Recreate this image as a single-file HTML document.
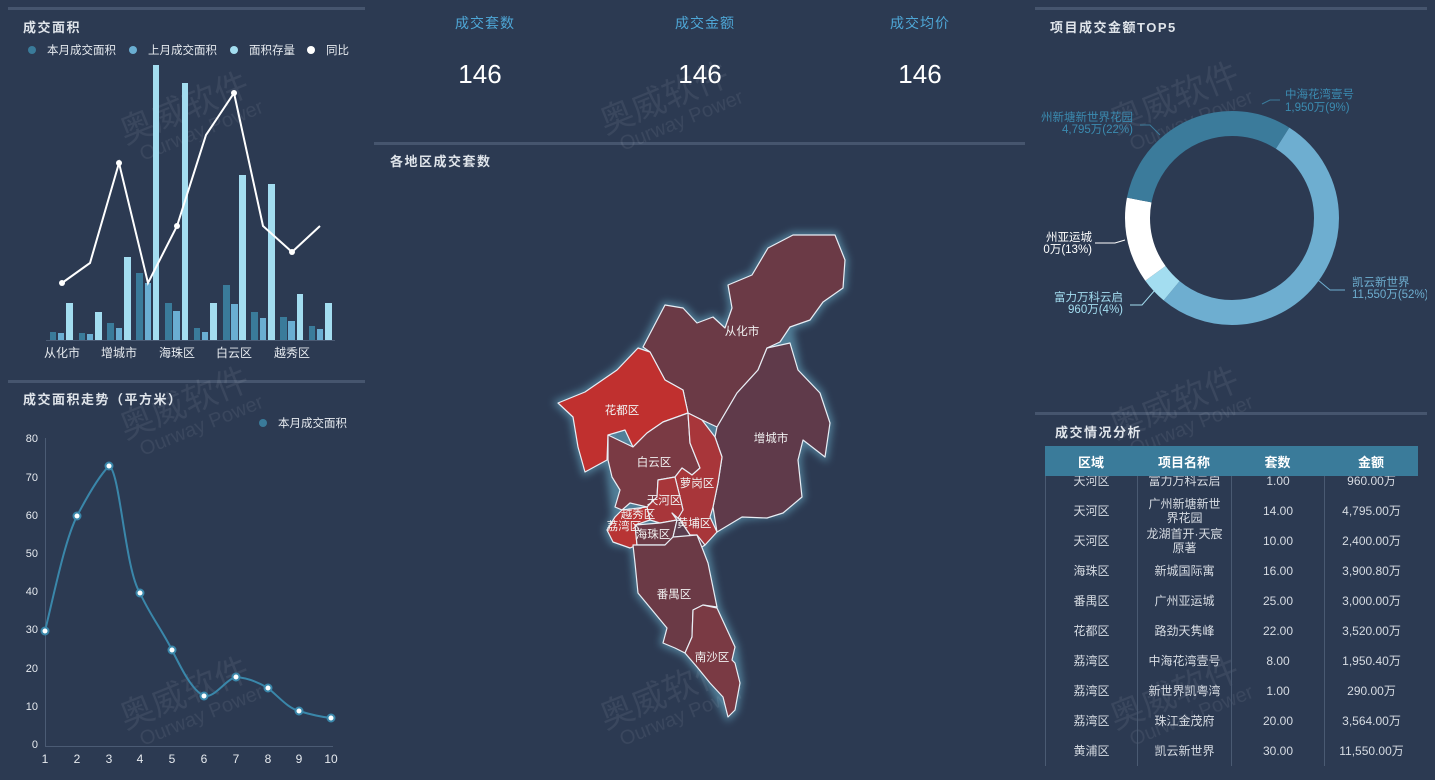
<!DOCTYPE html>
<html><head><meta charset="utf-8"><style>
*{margin:0;padding:0;box-sizing:border-box}
body{width:1435px;height:780px;background:#2c3a52;font-family:"Liberation Sans","Noto Sans CJK SC",sans-serif;color:#dfe4ea;position:relative;overflow:hidden}
.a{position:absolute}
.bar{position:absolute;height:3px;background:#46556e}
.t{position:absolute;font-size:13px;font-weight:bold;letter-spacing:1.5px;color:#dfe4ea}
.wm{position:absolute;font-size:34px;color:rgba(255,255,255,0.07);transform:rotate(-22deg);white-space:nowrap;line-height:1}
.wm small{display:block;font-size:20px;margin-left:10px}
table{border-collapse:collapse;position:absolute;width:373px;font-size:12px;color:#d6dbe2;table-layout:fixed}
td{height:30px;text-align:center;border-left:1px solid #4a5a72;border-right:1px solid #4a5a72;line-height:14px}
</style></head><body>
<div class="bar" style="left:8px;top:7px;width:357px"></div>
<div class="bar" style="left:374px;top:142px;width:651px"></div>
<div class="bar" style="left:1035px;top:7px;width:392px"></div>
<div class="bar" style="left:8px;top:380px;width:357px"></div>
<div class="bar" style="left:1035px;top:412px;width:392px"></div>

<div class="wm" style="left:600px;top:80px">奥威软件<small>Ourway Power</small></div>
<div class="wm" style="left:1110px;top:80px">奥威软件<small>Ourway Power</small></div>
<div class="wm" style="left:120px;top:90px">奥威软件<small>Ourway Power</small></div>
<div class="wm" style="left:120px;top:385px">奥威软件<small>Ourway Power</small></div>
<div class="wm" style="left:600px;top:385px">奥威软件<small>Ourway Power</small></div>
<div class="wm" style="left:1110px;top:385px">奥威软件<small>Ourway Power</small></div>
<div class="wm" style="left:120px;top:675px">奥威软件<small>Ourway Power</small></div>
<div class="wm" style="left:600px;top:675px">奥威软件<small>Ourway Power</small></div>
<div class="wm" style="left:1110px;top:675px">奥威软件<small>Ourway Power</small></div>

<div class="t" style="left:23px;top:17px">成交面积</div>
<div class="t" style="left:23px;top:389px">成交面积走势（平方米）</div>
<div class="t" style="left:390px;top:151px">各地区成交套数</div>
<div class="t" style="left:1050px;top:17px">项目成交金额TOP5</div>
<div class="t" style="left:1055px;top:422px">成交情况分析</div>

<div class="a" style="left:425px;top:13px;width:120px;text-align:center;color:#4ea6d6;font-size:14px;letter-spacing:1px">成交套数</div>
<div class="a" style="left:645px;top:13px;width:120px;text-align:center;color:#4ea6d6;font-size:14px;letter-spacing:1px">成交金额</div>
<div class="a" style="left:860px;top:13px;width:120px;text-align:center;color:#4ea6d6;font-size:14px;letter-spacing:1px">成交均价</div>
<div class="a" style="left:420px;top:59px;width:120px;text-align:center;color:#fff;font-size:26px">146</div>
<div class="a" style="left:640px;top:59px;width:120px;text-align:center;color:#fff;font-size:26px">146</div>
<div class="a" style="left:860px;top:59px;width:120px;text-align:center;color:#fff;font-size:26px">146</div>

<svg class="a" style="left:0;top:0" width="370" height="380" font-family="Liberation Sans,Noto Sans CJK SC,sans-serif">
<g font-size="11.5" fill="#e6eaef">
<circle cx="32" cy="50" r="4" fill="#3a7b9a"/><text x="47" y="54">本月成交面积</text>
<circle cx="133" cy="50" r="4" fill="#6aaed2"/><text x="148" y="54">上月成交面积</text>
<circle cx="234" cy="50" r="4" fill="#a3ddf0"/><text x="249" y="54">面积存量</text>
<circle cx="311" cy="50" r="4" fill="#fff"/><text x="326" y="54">同比</text>
</g>
<g>
<rect x="50" y="332" width="6" height="8" fill="#3a7b9a"/><rect x="58" y="333" width="6" height="7" fill="#6aaed2"/><rect x="66" y="303" width="7" height="37" fill="#a3ddf0"/>
<rect x="79" y="333" width="6" height="7" fill="#3a7b9a"/><rect x="87" y="334" width="6" height="6" fill="#6aaed2"/><rect x="95" y="312" width="7" height="28" fill="#a3ddf0"/>
<rect x="107" y="323" width="7" height="17" fill="#3a7b9a"/><rect x="116" y="328" width="6" height="12" fill="#6aaed2"/><rect x="124" y="257" width="7" height="83" fill="#a3ddf0"/>
<rect x="136" y="273" width="7" height="67" fill="#3a7b9a"/><rect x="145" y="283" width="6" height="57" fill="#6aaed2"/><rect x="153" y="65" width="6" height="275" fill="#a3ddf0"/>
<rect x="165" y="303" width="7" height="37" fill="#3a7b9a"/><rect x="173" y="311" width="7" height="29" fill="#6aaed2"/><rect x="182" y="83" width="6" height="257" fill="#a3ddf0"/>
<rect x="194" y="328" width="6" height="12" fill="#3a7b9a"/><rect x="202" y="332" width="6" height="8" fill="#6aaed2"/><rect x="210" y="303" width="7" height="37" fill="#a3ddf0"/>
<rect x="223" y="285" width="7" height="55" fill="#3a7b9a"/><rect x="231" y="304" width="7" height="36" fill="#6aaed2"/><rect x="239" y="175" width="7" height="165" fill="#a3ddf0"/>
<rect x="251" y="312" width="7" height="28" fill="#3a7b9a"/><rect x="260" y="318" width="6" height="22" fill="#6aaed2"/><rect x="268" y="184" width="7" height="156" fill="#a3ddf0"/>
<rect x="280" y="317" width="7" height="23" fill="#3a7b9a"/><rect x="288" y="321" width="7" height="19" fill="#6aaed2"/><rect x="297" y="294" width="6" height="46" fill="#a3ddf0"/>
<rect x="309" y="326" width="6" height="14" fill="#3a7b9a"/><rect x="317" y="329" width="6" height="11" fill="#6aaed2"/><rect x="325" y="303" width="7" height="37" fill="#a3ddf0"/>
</g>
<line x1="46" y1="340.5" x2="335" y2="340.5" stroke="#4b5b74"/>
<polyline points="62,283 90,263 119,163 148,283 177,226 206,135 234,93 263,226 292,252 320,226" fill="none" stroke="#fff" stroke-width="2"/>
<g fill="#fff"><circle cx="62" cy="283" r="3"/><circle cx="119" cy="163" r="3"/><circle cx="177" cy="226" r="3"/><circle cx="234" cy="93" r="3"/><circle cx="292" cy="252" r="3"/></g>
<g font-size="12" fill="#e6eaef" text-anchor="middle"><text x="62" y="357">从化市</text><text x="119" y="357">增城市</text><text x="177" y="357">海珠区</text><text x="234" y="357">白云区</text><text x="292" y="357">越秀区</text></g>
</svg>

<svg class="a" style="left:0;top:380px" width="370" height="400" font-family="Liberation Sans,sans-serif">
<circle cx="263" cy="43" r="4" fill="#3a7b9a"/><text x="278" y="47" font-size="11.5" fill="#e6eaef" font-family="Liberation Sans,Noto Sans CJK SC,sans-serif">本月成交面积</text>
<g font-size="11" fill="#e6eaef" text-anchor="end">
<text x="38" y="62">80</text><text x="38" y="101">70</text><text x="38" y="139">60</text><text x="38" y="177">50</text><text x="38" y="215">40</text><text x="38" y="253">30</text><text x="38" y="292">20</text><text x="38" y="330">10</text><text x="38" y="368">0</text>
</g>
<line x1="45.5" y1="58" x2="45.5" y2="366" stroke="#4b5b74"/>
<line x1="45" y1="366.5" x2="333" y2="366.5" stroke="#4b5b74"/>
<g font-size="12" fill="#e6eaef" text-anchor="middle">
<text x="45" y="383">1</text><text x="77" y="383">2</text><text x="109" y="383">3</text><text x="140" y="383">4</text><text x="172" y="383">5</text><text x="204" y="383">6</text><text x="236" y="383">7</text><text x="268" y="383">8</text><text x="299" y="383">9</text><text x="331" y="383">10</text>
</g>
<path d="M45,251 C55,210 65,160 77,136 C88,115 100,95 109,86 C120,90 125,190 140,213 C150,235 162,250 172,270 C182,290 192,310 204,316 C215,318 225,300 236,297 C248,298 258,302 268,308 C280,318 288,328 299,331 C312,335 322,337 331,338" fill="none" stroke="#3a87aa" stroke-width="2"/>
<g fill="#fff" stroke="#3a87aa" stroke-width="2">
<circle cx="45" cy="251" r="3.5"/><circle cx="77" cy="136" r="3.5"/><circle cx="109" cy="86" r="3.5"/><circle cx="140" cy="213" r="3.5"/><circle cx="172" cy="270" r="3.5"/><circle cx="204" cy="316" r="3.5"/><circle cx="236" cy="297" r="3.5"/><circle cx="268" cy="308" r="3.5"/><circle cx="299" cy="331" r="3.5"/><circle cx="331" cy="338" r="3.5"/>
</g>
</svg>

<svg class="a" style="left:0;top:0" width="1435" height="780" font-family="Liberation Sans,Noto Sans CJK SC,sans-serif">
<defs><filter id="gl" x="-20%" y="-20%" width="140%" height="140%"><feGaussianBlur stdDeviation="4"/></filter></defs>
<g stroke="#7fd3ee" stroke-width="6" fill="#7fd3ee" opacity="0.45" filter="url(#gl)">
<polygon points="643,347 665,305 683,308 697,323 713,317 725,328 732,308 728,285 752,275 768,248 793,235 835,235 845,260 843,288 823,302 810,320 790,327 798,370 820,393 830,423 825,457 803,440 798,460 802,497 783,513 742,517 717,532 705,545 717,607 735,647 740,683 735,710 728,717 710,683 685,653 663,643 667,628 638,593 635,563 633,545 613,542 607,530 615,517 608,460 607,460 585,472 578,447 573,417 558,403 585,392 617,370 638,348"/>
</g>
<g stroke="#e8eef5" stroke-width="1.2" stroke-linejoin="round">
<polygon fill="#6b3a46" points="643,347 665,305 683,308 697,323 713,317 725,328 732,308 728,285 752,275 768,248 793,235 835,235 845,260 843,288 823,302 810,320 790,327 780,342 767,348 758,370 737,393 717,427 702,420 688,413 683,390 665,380 650,352"/>
<polygon fill="#5f3a4a" points="717,427 737,393 758,370 767,348 790,343 798,370 820,393 830,423 825,457 803,440 798,460 802,497 783,513 767,518 742,517 717,532 713,507 718,483 722,457 715,437"/>
<polygon fill="#c0302f" points="558,403 585,392 617,370 638,348 650,352 665,380 683,390 688,413 663,422 647,433 633,447 625,430 608,435 607,460 585,472 578,447 573,417"/>
<polygon fill="#7a3a44" points="608,435 633,447 647,433 663,422 688,413 690,443 700,468 692,475 682,468 675,477 658,480 657,497 647,507 630,503 622,510 615,507 620,490 612,477 608,460"/>
<polygon fill="#a8363a" points="688,413 702,420 715,437 722,457 718,483 713,507 710,517 717,532 705,545 697,550 690,535 680,520 672,513 683,510 680,497 675,477 682,468 692,475 700,468 690,443"/>
<polygon fill="#a8363a" points="658,480 675,477 680,497 683,510 677,520 660,523 650,520 647,507 657,497"/>
<polygon fill="#b83434" points="622,510 647,507 650,520 635,525 637,545 630,548 613,542 607,530 615,517"/>
<polygon fill="#6b3a46" points="635,525 660,523 677,520 673,537 665,545 637,545"/>
<polygon fill="#5a3d4e" points="672,513 680,520 690,535 697,535 705,545 697,550 673,537 677,520"/>
<polygon fill="#6b3a46" points="633,545 665,545 673,537 697,535 703,550 708,563 717,607 703,605 693,610 692,637 685,653 675,648 663,643 667,628 638,593 635,563"/>
<polygon fill="#7a3a44" points="685,653 692,637 693,610 703,605 717,608 735,647 732,660 735,663 740,683 735,710 728,717 723,697 710,683 697,667"/>
</g>
<g font-size="11.5" fill="#f0f0f0" text-anchor="middle">
<text x="742" y="335">从化市</text><text x="622" y="414">花都区</text><text x="771" y="442">增城市</text><text x="654" y="466">白云区</text><text x="697" y="487">萝岗区</text><text x="664" y="504">天河区</text><text x="638" y="518">越秀区</text><text x="624" y="530">荔湾区</text><text x="653" y="538">海珠区</text><text x="694" y="527">黄埔区</text><text x="674" y="598">番禺区</text><text x="712" y="661">南沙区</text>
</g>

<g fill="none" stroke-width="25" transform="rotate(-90 1232 218)">
<circle cx="1232" cy="218" r="94.5" stroke="#3b7b9b" stroke-dasharray="53.4 600" stroke-dashoffset="0"/>
<circle cx="1232" cy="218" r="94.5" stroke="#6eaed0" stroke-dasharray="308.8 600" stroke-dashoffset="-53.4"/>
<circle cx="1232" cy="218" r="94.5" stroke="#a3ddf0" stroke-dasharray="23.8 600" stroke-dashoffset="-362.2"/>
<circle cx="1232" cy="218" r="94.5" stroke="#ffffff" stroke-dasharray="77.2 600" stroke-dashoffset="-386"/>
<circle cx="1232" cy="218" r="94.5" stroke="#3b7b9b" stroke-dasharray="130.6 600" stroke-dashoffset="-463.2"/>
</g>
<g fill="none" stroke-width="1">
<path d="M1262,104 L1270,100 L1280,100" stroke="#3b7b9b"/>
<path d="M1160,135 L1150,125 L1140,125" stroke="#3b7b9b"/>
<path d="M1125,240 L1115,243 L1095,243" stroke="#fff"/>
<path d="M1155,290 L1142,305 L1130,305" stroke="#a3ddf0"/>
<path d="M1318,280 L1330,290 L1345,290" stroke="#6eaed0"/>
</g>
<g font-size="11.5">
<text x="1285" y="98" fill="#3b8bb0">中海花湾壹号</text><text x="1285" y="111" fill="#3b8bb0">1,950万(9%)</text>
<text x="1133" y="121" fill="#3b8bb0" text-anchor="end">州新塘新世界花园</text><text x="1133" y="133" fill="#3b8bb0" text-anchor="end">4,795万(22%)</text>
<text x="1092" y="241" fill="#fff" text-anchor="end">州亚运城</text><text x="1092" y="253" fill="#fff" text-anchor="end">0万(13%)</text>
<text x="1123" y="301" fill="#a3ddf0" text-anchor="end">富力万科云启</text><text x="1123" y="313" fill="#a3ddf0" text-anchor="end">960万(4%)</text>
<text x="1352" y="286" fill="#6eaed0">凯云新世界</text><text x="1352" y="298" fill="#6eaed0">11,550万(52%)</text>
</g>
</svg>
<div class="a" style="left:1427px;top:260px;width:8px;height:60px;background:#2c3a52"></div>

<div class="a" style="left:1045px;top:446px;width:373px;height:320px;overflow:hidden">
<table style="left:0;top:20px">
<colgroup><col style="width:92px"><col style="width:94px"><col style="width:93px"><col style="width:94px"></colgroup>
<tr><td>天河区</td><td>富力万科云启</td><td>1.00</td><td>960.00万</td></tr>
<tr><td>天河区</td><td>广州新塘新世<br>界花园</td><td>14.00</td><td>4,795.00万</td></tr>
<tr><td>天河区</td><td>龙湖首开·天宸<br>原著</td><td>10.00</td><td>2,400.00万</td></tr>
<tr><td>海珠区</td><td>新城国际寓</td><td>16.00</td><td>3,900.80万</td></tr>
<tr><td>番禺区</td><td>广州亚运城</td><td>25.00</td><td>3,000.00万</td></tr>
<tr><td>花都区</td><td>路劲天隽峰</td><td>22.00</td><td>3,520.00万</td></tr>
<tr><td>荔湾区</td><td>中海花湾壹号</td><td>8.00</td><td>1,950.40万</td></tr>
<tr><td>荔湾区</td><td>新世界凯粤湾</td><td>1.00</td><td>290.00万</td></tr>
<tr><td>荔湾区</td><td>珠江金茂府</td><td>20.00</td><td>3,564.00万</td></tr>
<tr><td>黄浦区</td><td>凯云新世界</td><td>30.00</td><td>11,550.00万</td></tr>
</table>
<div class="a" style="left:0;top:0;width:373px;height:30px;background:#3a7b9a;display:flex;font-weight:bold;font-size:13px;color:#fff;align-items:center">
<div style="width:92px;text-align:center">区域</div><div style="width:94px;text-align:center">项目名称</div><div style="width:93px;text-align:center">套数</div><div style="width:94px;text-align:center">金额</div></div>
</div>
</body></html>
